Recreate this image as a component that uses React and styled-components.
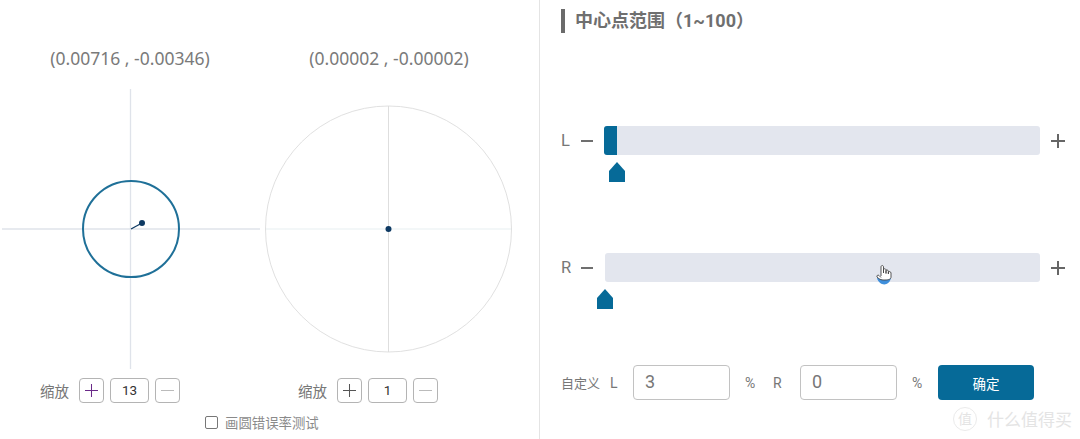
import React from 'react';
import styled, { createGlobalStyle } from 'styled-components';

const GlobalStyle = createGlobalStyle`
    html, body {
        margin: 0;
        padding: 0;
        background: #fff;
        overflow: hidden;
    }
    body {
        font-family: Roboto, "Noto Sans CJK SC", sans-serif;
        color: #777;
    }
`;

const Page = styled.div`
    position: relative;
    width: 1080px;
    height: 439px;
    display: flex;
    overflow: hidden;
`;

const LeftPane = styled.section`
    width: 539px;
    height: 100%;
    border-right: 1px solid #e4e4e4;
    display: flex;
    flex-direction: column;
`;

const Plots = styled.div`
    display: flex;
    padding-top: 46px;
`;

const PlotColumn = styled.div`
    width: 260px;
    display: flex;
    flex-direction: column;
`;

const Coordinates = styled.div`
    height: 24px;
    line-height: 24px;
    margin-bottom: 19px;
    text-align: center;
    font-family: "Noto Sans", "Noto Sans CJK SC", sans-serif;
    font-size: 17.5px;
    color: #7a7a7a;
    transform: translateX(${(p) => p.$shift}px);
`;

const PlotSvg = styled.svg`
    display: block;
    width: 260px;
    height: 280px;
`;

const ZoomRow = styled.div`
    display: flex;
    align-items: center;
    height: 25px;
    margin-top: 9px;
    padding-left: ${(p) => p.$inset}px;
`;

const ZoomLabel = styled.span`
    width: 39px;
    font-size: 14.5px;
    color: #777;
`;

const ZoomButton = styled.button`
    width: 25px;
    height: 25px;
    padding: 0;
    box-sizing: border-box;
    border: 1px solid #b4b4b4;
    border-radius: 4px;
    background: #fff;
    display: flex;
    align-items: center;
    justify-content: center;
`;

const ZoomValue = styled.div`
    width: 39px;
    height: 25px;
    margin: 0 6px;
    box-sizing: border-box;
    border: 1px solid #b4b4b4;
    border-radius: 4px;
    font-size: 13.5px;
    line-height: 23px;
    text-align: center;
    color: #333;
`;

const TestRow = styled.label`
    display: flex;
    align-items: center;
    height: 16px;
    margin-top: 11px;
    padding-left: 205px;
    font-size: 13.4px;
    color: #8a8a8a;
`;

const TestBox = styled.span`
    width: 11px;
    height: 11px;
    margin-right: 7px;
    border: 1px solid #777;
    border-radius: 2px;
`;

const RightPane = styled.section`
    flex: 1;
    padding: 9px 0 0 21px;
    display: flex;
    flex-direction: column;
`;

const Heading = styled.h2`
    height: 24px;
    margin: 0;
    padding-left: 10px;
    border-left: 4px solid #6b6b6b;
    font-size: 18px;
    font-weight: 700;
    line-height: 24px;
    color: #6f6f6f;
`;

const Sliders = styled.div`
    margin-top: 93px;
    display: flex;
    flex-direction: column;
    gap: 71px;
`;

const SliderBlock = styled.div`
    display: flex;
    flex-direction: column;
`;

const SliderRow = styled.div`
    display: flex;
    align-items: center;
    height: 29px;
`;

const SideLabel = styled.span`
    width: 20px;
    font-size: 16.5px;
    color: #777;
`;

const Track = styled.div`
    width: ${(p) => p.$width}px;
    height: 29px;
    margin: 0 11px 0 ${(p) => p.$gap}px;
    border-radius: 3px;
    background: #e3e6ee;
    display: flex;
`;

const TrackFill = styled.div`
    width: 13px;
    height: 100%;
    border-radius: 3px 0 0 3px;
    background: #066a98;
`;

const Marker = styled.svg`
    display: block;
    width: 16px;
    height: 20px;
    margin: 7px 0 0 ${(p) => p.$offset}px;
`;

const CustomRow = styled.div`
    display: flex;
    align-items: center;
    height: 35px;
    margin-top: 56px;
    font-size: 13px;
    color: #777;
`;

const CustomLabel = styled.span`
    width: ${(p) => p.$width}px;
    margin-left: ${(p) => p.$before || 0}px;
    font-size: ${(p) => p.$size || 13}px;
    flex: none;
`;

const NumberBox = styled.div`
    width: 97px;
    height: 35px;
    flex: none;
    box-sizing: border-box;
    padding-left: 11px;
    border: 1px solid #c2c2c2;
    border-radius: 4px;
    font-size: 18px;
    line-height: 31px;
    color: #777;
`;

const Confirm = styled.button`
    width: 96px;
    height: 35px;
    margin-left: 11px;
    padding: 0;
    border: none;
    border-radius: 4px;
    background: #066a98;
    color: #fff;
    font-family: inherit;
    font-size: 13.5px;
`;

const HandCursor = styled.svg`
    position: absolute;
    left: 875px;
    top: 264px;
    width: 18px;
    height: 22px;
`;

const Watermark = styled.div`
    position: absolute;
    left: 953px;
    top: 406px;
    display: flex;
    align-items: center;
    gap: 10px;
    font-size: 17px;
    color: #e4e4e4;
`;

const Seal = styled.span`
    width: 22px;
    height: 22px;
    border: 1px solid #ebebeb;
    border-radius: 50%;
    font-size: 14px;
    line-height: 22px;
    text-align: center;
`;

const Plus = ({ color = '#555', size = 14, weight = 1.4 }) => (
    <svg width={size} height={size} viewBox="0 0 14 14">
        <path d="M7 0V14M0 7H14" stroke={color} strokeWidth={weight} fill="none" />
    </svg>
);

const Minus = ({ color = '#bbb', size = 14, weight = 1.4 }) => (
    <svg width={size} height={size} viewBox="0 0 14 14">
        <path d="M0 7H14" stroke={color} strokeWidth={weight} fill="none" />
    </svg>
);

const Pointer = ({ offset }) => (
    <Marker $offset={offset} viewBox="0 0 16 20">
        <path d="M8 0L16 9V20H0V9Z" fill="#066a98" />
    </Marker>
);

function ZoomControl({ inset, value, plusColor }) {
    return (
        <ZoomRow $inset={inset}>
            <ZoomLabel>缩放</ZoomLabel>
            <ZoomButton><Plus color={plusColor} size={13} weight={1.1} /></ZoomButton>
            <ZoomValue>{value}</ZoomValue>
            <ZoomButton><Minus size={13} weight={1.1} /></ZoomButton>
        </ZoomRow>
    );
}

export default function App() {
    return (
        <Page>
            <GlobalStyle />
            <LeftPane>
                <Plots>
                    <PlotColumn>
                        <Coordinates $shift={0}>(0.00716 , -0.00346)</Coordinates>
                        <PlotSvg viewBox="0 0 260 280">
                            <path d="M2 140H260" stroke="#dfe3ea" strokeWidth="1.3" />
                            <path d="M130.5 0V280" stroke="#dfe3ea" strokeWidth="1.3" />
                            <circle cx="131" cy="140" r="48" fill="none" stroke="#1f7098" strokeWidth="2" />
                            <path d="M131 140L142 134" stroke="#0e3a63" strokeWidth="1.3" />
                            <circle cx="142" cy="134" r="3" fill="#0e3a63" />
                        </PlotSvg>
                        <ZoomControl inset={40} value="13" plusColor="#6a2a88" />
                    </PlotColumn>
                    <PlotColumn>
                        <Coordinates $shift={-1}>(0.00002 , -0.00002)</Coordinates>
                        <PlotSvg viewBox="0 0 260 280">
                            <path d="M5 140H252" stroke="#e8eff1" strokeWidth="1.2" />
                            <path d="M128.5 17V263" stroke="#dedede" strokeWidth="1" />
                            <circle cx="128.5" cy="140" r="123" fill="none" stroke="#dddddd" strokeWidth="0.9" />
                            <circle cx="128.5" cy="140" r="3" fill="#0e3a63" />
                        </PlotSvg>
                        <ZoomControl inset={38} value="1" plusColor="#555" />
                    </PlotColumn>
                </Plots>
                <TestRow>
                    <TestBox />
                    画圆错误率测试
                </TestRow>
            </LeftPane>
            <RightPane>
                <Heading>中心点范围（1~100）</Heading>
                <Sliders>
                    <SliderBlock>
                        <SliderRow>
                            <SideLabel>L</SideLabel>
                            <Minus color="#666" size={12} weight={2.2} />
                            <Track $width={436} $gap={11}><TrackFill /></Track>
                            <Plus color="#666" size={14} weight={2} />
                        </SliderRow>
                        <Pointer offset={48} />
                    </SliderBlock>
                    <SliderBlock>
                        <SliderRow>
                            <SideLabel>R</SideLabel>
                            <Minus color="#666" size={12} weight={2.2} />
                            <Track $width={435} $gap={12} />
                            <Plus color="#666" size={14} weight={2} />
                        </SliderRow>
                        <Pointer offset={36} />
                    </SliderBlock>
                </Sliders>
                <CustomRow>
                    <CustomLabel $width={49}>自定义</CustomLabel>
                    <CustomLabel $width={23} $size={14}>L</CustomLabel>
                    <NumberBox>3</NumberBox>
                    <CustomLabel $width={15} $before={15} $size={14}>%</CustomLabel>
                    <CustomLabel $width={27} $before={13} $size={14}>R</CustomLabel>
                    <NumberBox>0</NumberBox>
                    <CustomLabel $width={15} $before={15} $size={14}>%</CustomLabel>
                    <Confirm>确定</Confirm>
                </CustomRow>
            </RightPane>
            <HandCursor viewBox="0 0 18 22">
                <path d="M2 14C4 22 14 23 16 14Z" fill="#3f8fdc" />
                <path d="M6 12V3C6 1 8.5 1 8.5 3V9L8.5 5.5C9 4.5 10.5 4.5 11 5.7V9.5V6.5C11.5 5.8 13 5.8 13.4 7V10V8C14 7.2 15.8 7.4 16 9V13C16 15 14 16 10 16C7 16 5 16 2 13C1.4 11.5 3 10.5 4 11.5L6 13.5" fill="#fff" stroke="#444" strokeWidth="0.9" />
            </HandCursor>
            <Watermark>
                <Seal>值</Seal>
                <span>什么值得买</span>
            </Watermark>
        </Page>
    );
}
